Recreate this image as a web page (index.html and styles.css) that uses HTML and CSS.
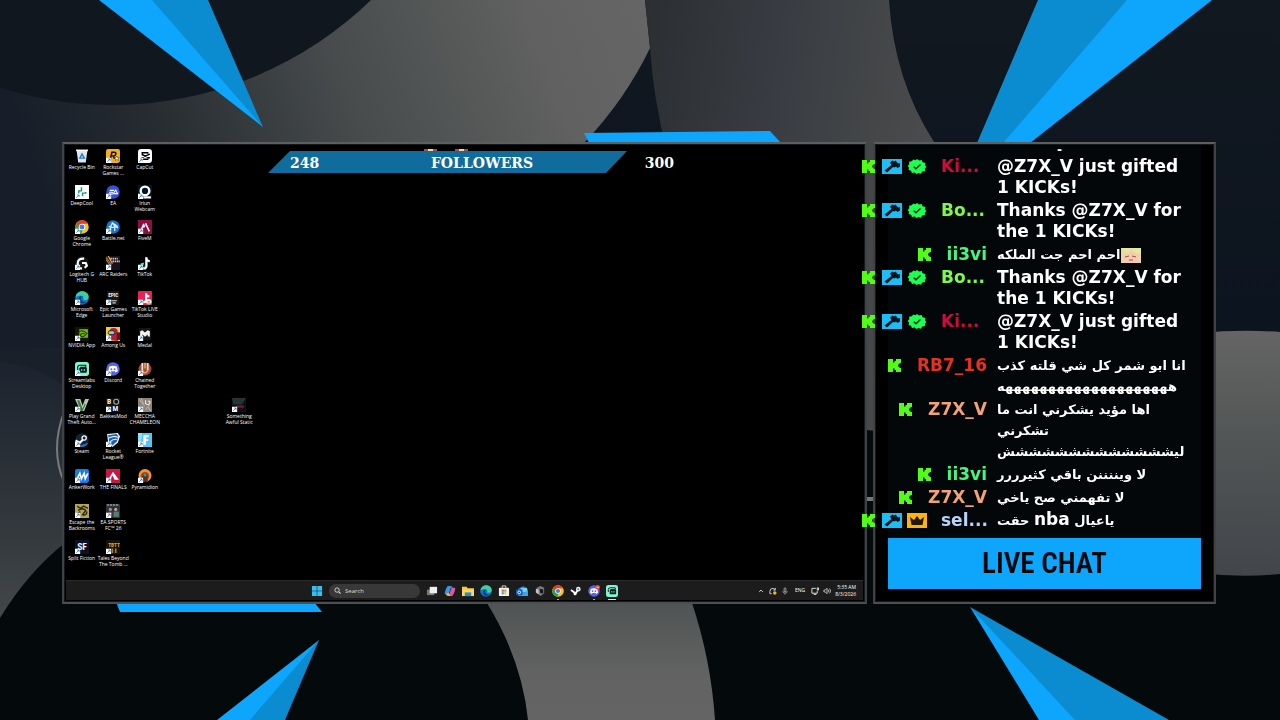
FILE: index.html
```html
<!DOCTYPE html>
<html lang="en">
<head>
  <meta charset="UTF-8">
  <meta name="viewport" content="width=device-width, initial-scale=1.0">
  <title>Stream Overlay</title>
  <link rel="stylesheet" href="styles.css">
</head>
<body>
  <svg class="backdrop" viewBox="0 0 1280 720" preserveAspectRatio="none" aria-hidden="true">
    <defs>
      <linearGradient id="sky" x1="0" y1="0.2" x2="1" y2="0">
        <stop offset="0" stop-color="#171e29"/>
        <stop offset="0.2" stop-color="#272c31"/>
        <stop offset="0.5" stop-color="#484c4d"/>
        <stop offset="0.8" stop-color="#606160"/>
        <stop offset="1" stop-color="#666"/>
      </linearGradient>
      <linearGradient id="side" x1="0" y1="0" x2="0" y2="1">
        <stop offset="0" stop-color="#1a212d"/>
        <stop offset="0.5" stop-color="#34393e"/>
        <stop offset="1" stop-color="#565959"/>
      </linearGradient>
      <linearGradient id="mid" x1="0" y1="0" x2="1" y2="0.2">
        <stop offset="0" stop-color="#2b2f32"/>
        <stop offset="0.45" stop-color="#383c42"/>
        <stop offset="1" stop-color="#4a4b4b"/>
      </linearGradient>
      <linearGradient id="low" x1="0" y1="0" x2="0" y2="1">
        <stop offset="0" stop-color="#505454"/>
        <stop offset="0.6" stop-color="#626262"/>
        <stop offset="1" stop-color="#646464"/>
      </linearGradient>
      <linearGradient id="disc" x1="0" y1="0" x2="0" y2="1">
        <stop offset="0" stop-color="#646564"/>
        <stop offset="0.4" stop-color="#545757"/>
        <stop offset="1" stop-color="#42454a"/>
      </linearGradient>
      <linearGradient id="night" x1="0" y1="0" x2="0" y2="1">
        <stop offset="0" stop-color="#11181f"/>
        <stop offset="1" stop-color="#0c1420"/>
      </linearGradient>
    </defs>
    <rect width="1280" height="720" fill="#04090b"/>
    <rect width="660" height="360" fill="url(#sky)"/>
    <circle cx="112" cy="-267" r="372" fill="#11171e"/>
    <rect y="348" width="200" height="372" fill="url(#side)"/>
    <path d="M0 348q30 0 62 6v30q-30-20-62-22z" fill="#1a202a"/>
    <path d="M645 0H1280V333H584V143Q625 100 650 48z" fill="url(#night)"/>
    <path d="M645 0H889Q894 80 934 142V436L866 430V360H760Q660 200 650 48z" fill="url(#mid)"/>
    <rect x="866" y="497" width="8" height="4" fill="#777"/>
    <path d="M1200 333Q1240 329 1280 332V574Q1240 578 1200 573z" fill="url(#disc)"/>
    <path d="M0 618Q28 572 66 542H300L487 603Q520 660 528 720H0z" fill="#04090b"/>
    <path d="M487 603H692Q711 660 715 720H528Q522 660 487 603z" fill="url(#low)"/>
    <path d="M64 412Q50 450 64 482" fill="none" stroke="#777a7c" stroke-width="2"/>
    <g fill="#0ea5fc">
      <path d="M99 0H180L263 127z"/>
      <path d="M1080 0H1212L1030 143H990z"/>
      <path d="M584 133L770 131L781 143H589z"/>
      <path d="M116 602H314L322 612H120z"/>
      <path d="M217 720H270L319 640z"/>
      <path d="M1039 720H1120L970 607z"/>
    </g>
    <g fill="#0b8bd0">
      <path d="M152 0H208L263 127z"/>
      <path d="M1038 0H1127L1003 143H977z"/>
      <path d="M250 720H285L319 640z"/>
      <path d="M1075 720H1169L970 607z"/>
    </g>
  </svg>

  <!-- shared drawings -->
  <svg class="sprites" aria-hidden="true">
    <symbol id="arrow" viewBox="0 0 5 5"><path d="M0 0h5v5H0z" fill="#fff"/><path d="M1.2 3.9L3.6 1.4M2 1.3h1.8v1.8" stroke="#2a6fc0" stroke-width=".7" fill="none"/></symbol>
    <symbol id="kick" viewBox="0 0 13 13"><path d="M0 0h5v3.500h1.500V2H8V0h5v4h-1.500v1.500H10v2h1.500V9H13v4H8v-2H6.500V9.500H5V13H0z" fill="#53fc18"/></symbol>
    <symbol id="hammer" viewBox="0 0 20 15"><path d="M0 0h20v15H0z" fill="#1dbdf5"/><path d="M8 3.500l2.500-2 1.500 1 1.500-1 2.500 3 2-.5v3.500l-2.500 1.500-1.500-1.500-1.500 1-1.500-.5L5 13.500 2.500 11.500 9.500 6z" fill="#07141b"/></symbol>
    <symbol id="verified" viewBox="0 0 20 16"><path d="M10 0l2.200 1.600L15 1l1 2.500 3 .8-.5 2.600L20 8.500l-1.700 1.800.3 2.500-3 .6L14 15.600l-2.500-.8L9.500 16l-2-1.500-3 .4-.8-2.300L1 11.600l.6-2.400L0 7.500l1.800-2L1.500 3l3-.5L6 .4l2.400.8z" fill="#1cff50"/><path d="M6.500 8.300l2.400 2.200 4.800-4.700" stroke="#06210c" stroke-width="1.400" fill="none"/></symbol>
    <symbol id="crown" viewBox="0 0 20 15"><path d="M0 0h20v15H0z" fill="#fdb40a"/><path d="M3 4l4 3 3-4 3 4 4-3-1.500 8h-11z" fill="#241700"/></symbol>
    <symbol id="edge" viewBox="0 0 13 13"><circle cx="6.500" cy="6.500" r="6.300" fill="#1373c4"/><path d="M.5 6C1 2.500 3.500.3 6.700.3c3.500 0 6 2.400 6 5 0 2-1.500 3.200-3.500 3.200-1 0-1.800-.4-1.500-1 .8-1.400-.2-3-2-3C3.500 4.500 1.500 5 .5 6z" fill="#3ad0a0"/><path d="M3.500 8c0-2 1-3.300 2.700-3.500C4.500 7.500 6.500 11 10.500 10.500c-1 1.300-7 2.500-7-2.500z" fill="#0b3f86"/></symbol>
    <symbol id="chrome" viewBox="0 0 13 13"><circle cx="6.500" cy="6.500" r="6.300" fill="#fbc116"/><path d="M1 3.400a6.300 6.300 0 0 1 11 0H6.500L4 8z" fill="#e33b2e"/><path d="M1 3.400L4 8.200l3 1-1.200 3.600A6.300 6.300 0 0 1 1 3.400z" fill="#25a24b"/><circle cx="6.500" cy="6.500" r="3" fill="#fff"/><circle cx="6.500" cy="6.500" r="2.300" fill="#3b7ded"/></symbol>
    <symbol id="discord" viewBox="0 0 13 13"><circle cx="6.500" cy="6.500" r="6.300" fill="#5562ea"/><path d="M3 4.200q3.500-1.600 7 0l1 4.300-2.200 1.200-.6-1H4.800l-.6 1L2 8.500z" fill="#fff"/><circle cx="5" cy="6.700" r=".9" fill="#5562ea"/><circle cx="8" cy="6.700" r=".9" fill="#5562ea"/></symbol>
    <symbol id="streamlabs" viewBox="0 0 13 13"><rect width="13" height="13" rx="2.500" fill="#80f5d2"/><path d="M2.500 7.500V5q0-2 2-2h5.500v2H5" stroke="#0c1a20" fill="none"/><rect x="4" y="5" width="7" height="5" rx="1" fill="#0c1a20"/><path d="M6.300 6.500v1.800M8.600 6.500v1.800" stroke="#80f5d2" stroke-width=".9"/></symbol>
    <symbol id="steam" viewBox="0 0 13 13"><circle cx="6.500" cy="6.500" r="6.300" fill="#10233f"/><path d="M3 12a6.300 6.300 0 0 0 9.500-3z" fill="#1b76ab"/><circle cx="8.500" cy="4.700" r="2" fill="none" stroke="#fff" stroke-width="1.200"/><path d="M.5 7l4 2 3-3" stroke="#fff" stroke-width="2" fill="none"/></symbol>
  </svg>

  <main class="stage">
    <section class="panel screen" aria-label="Desktop">
      <div class="desktop">
        <a class="app" href="#"><svg viewBox="0 0 13 13"><path d="M1.500 1.500h10l-1.500 11H3z" fill="#dce8ee"/><path d="M1 .5h11V2H1z" fill="#fff"/><path d="M4.500 8.500l2-3.800 2.200 3.800z" fill="none" stroke="#1b7fd6" stroke-width="1.300"/></svg>Recycle Bin</a>
        <a class="app" href="#"><svg viewBox="0 0 13 13"><rect width="13" height="13" rx="2" fill="#f7ae1c"/><path d="M4 9.500L5.500 3H8q1.500.3 1 2T6.500 6.500L8 9" fill="none" stroke="#111" stroke-width="1.500"/><path d="M10 6.500l.7 1.500h1.600l-1.200 1 .5 1.700-1.600-1-1.500 1 .4-1.700-1.200-1h1.600z" fill="#fff" stroke="#111" stroke-width=".4"/><use href="#arrow" y="8" width="5" height="5"/></svg>Rockstar<br>Games ...</a>
        <a class="app" href="#"><svg viewBox="0 0 13 13"><rect width="13" height="13" rx="3" fill="#fff"/><path d="M9 4.500V3.500H4v1.800l7 3M9 8.500v1H4V7.800l7-3" fill="none" stroke="#000" stroke-width="1.400"/><use href="#arrow" y="8" width="5" height="5"/></svg>CapCut</a>
        <a class="app" href="#"><svg viewBox="0 0 13 13"><path d="M0 0h13v13H0z" fill="#fff"/><path d="M6 2v3.500H3.500V8M7 10.500V7.500h3v-1" fill="none" stroke="#139b79" stroke-width="1.300"/><use href="#arrow" y="8" width="5" height="5"/></svg>DeepCool</a>
        <a class="app" href="#"><svg viewBox="0 0 13 13"><circle cx="6.500" cy="6.500" r="6.300" fill="#3450dc"/><path d="M3.500 5h4M3 6.700h3.500M2.500 8.300H6.500L9 4.700l2 3.800M7.500 8h3" fill="none" stroke="#fff" stroke-width="1"/><use href="#arrow" y="8" width="5" height="5"/></svg>EA</a>
        <a class="app" href="#"><svg viewBox="0 0 13 13"><path d="M0 0h13v13H0z" fill="#071426"/><circle cx="6.500" cy="5.500" r="4" fill="none" stroke="#fff" stroke-width="2.200"/><path d="M5 11.500h7" stroke="#fff" stroke-width="2"/><use href="#arrow" y="8" width="5" height="5"/></svg>Iriun<br>Webcam</a>
        <a class="app" href="#"><svg viewBox="0 0 13 13"><use href="#chrome"/><use href="#arrow" y="8" width="5" height="5"/></svg>Google<br>Chrome</a>
        <a class="app" href="#"><svg viewBox="0 0 13 13"><circle cx="6.500" cy="6.500" r="6.300" fill="#1673d2"/><path d="M5.500 2Q9 5 8 10M2.500 6q4.500 2 8.500-.5M4 10Q4 5 6 3q3 1 5 4.500" fill="none" stroke="#d9f1ff" stroke-width="1.200"/><use href="#arrow" y="8" width="5" height="5"/></svg>Battle.net</a>
        <a class="app" href="#"><svg viewBox="0 0 13 13"><path d="M0 0h13v13H0z" fill="#8e0f43"/><path d="M7 3l3.500 7.500M5.500 3.500L3 9M5 7l1.500-2" stroke="#fff" stroke-width="1.400"/><use href="#arrow" y="8" width="5" height="5"/></svg>FiveM</a>
        <a class="app" href="#"><svg viewBox="0 0 13 13"><circle cx="6.500" cy="6.500" r="6.300" fill="#151515"/><path d="M8.500 2.500Q2.500 2 2.500 7t4 4.500M6.500 6.500H10l1 2.500-2 2" fill="none" stroke="#fff" stroke-width="2"/><use href="#arrow" y="8" width="5" height="5"/></svg>Logitech G<br>HUB</a>
        <a class="app" href="#"><svg viewBox="0 0 13 13"><path d="M0 0h13v13H0z" fill="#17131c"/><path d="M0 1l5 7" stroke="#e9472f" stroke-width="1.300"/><path d="M0 3l4 6" stroke="#25ad79"/><path d="M2 0l4 7" stroke="#edbd3f"/><path d="M4 2.500h7M6 5h7" stroke="#d6c8be" stroke-width="1.700" stroke-dasharray="1.500 .6"/><use href="#arrow" y="8" width="5" height="5"/></svg>ARC Raiders</a>
        <a class="app" href="#"><svg viewBox="0 0 13 13"><path d="M7.500 1v8q-.5 2.500-2.800 2.200T3.500 7.500l2-.5M7.500 2q.5 2.500 3 3" fill="none" stroke="#23e5e2" stroke-width="2"/><path d="M8 1.500v8q-.5 2.500-2.800 2.200M8 2.500q.5 2 3 2.500" fill="none" stroke="#fff" stroke-width="1.700"/><use href="#arrow" y="8" width="5" height="5"/></svg>TikTok</a>
        <a class="app" href="#"><svg viewBox="0 0 13 13"><use href="#edge"/><use href="#arrow" y="8" width="5" height="5"/></svg>Microsoft<br>Edge</a>
        <a class="app" href="#"><svg viewBox="0 0 13 13"><path d="M1 0h11v13H1z" fill="#171717"/><text x="2" y="6" class="mark">EPIC</text><path d="M5 9h5M6 11h3" stroke="#ddd"/><use href="#arrow" y="8" width="5" height="5"/></svg>Epic Games<br>Launcher</a>
        <a class="app" href="#"><svg viewBox="0 0 13 13"><rect width="13" height="13" rx="1" fill="#ee1d52"/><path d="M7.500 2v6.500q-.5 2-2.500 1.800M7.500 3q.5 2 3 2" fill="none" stroke="#fff" stroke-width="2"/><circle cx="10" cy="10" r="2.500" fill="#fff"/><circle cx="10" cy="10" r="1.200" fill="#e4a92c"/><path d="M8 12h4" stroke="#28c89e"/><use href="#arrow" y="8" width="5" height="5"/></svg>TikTok LIVE<br>Studio</a>
        <a class="app" href="#"><svg viewBox="0 0 13 13"><path d="M0 0h13v13H0z" fill="#11160d"/><path d="M4 2h8v8H4z" fill="#76b900"/><path d="M2 6q4-5 9 0-4 5-6 2 1-3 4-1.500" fill="none" stroke="#1d3400"/><use href="#arrow" y="8" width="5" height="5"/></svg>NVIDIA App</a>
        <a class="app" href="#"><svg viewBox="0 0 13 13"><path d="M0 0h13v13H0z" fill="#f3cd39"/><path d="M3 12V5q0-4 4-4t4 4v8" fill="#b71d38"/><path d="M10 5h3v7h-3z" fill="#5c1020"/><rect x="2" y="3.500" width="6" height="3.500" rx="1.700" fill="#7ed0e0" stroke="#16141c" stroke-width=".7"/><use href="#arrow" y="8" width="5" height="5"/></svg>Among Us</a>
        <a class="app" href="#"><svg viewBox="0 0 13 13"><path d="M1 1h11v11H1z" fill="#151719"/><path d="M2 4l2-1 2.500 2L9 3l2 1v5l-2-.5V7L6.500 9 4 7v3H2z" fill="#f2f2f2"/><use href="#arrow" y="8" width="5" height="5"/></svg>Medal</a>
        <a class="app" href="#"><svg viewBox="0 0 13 13"><use href="#streamlabs"/><use href="#arrow" y="8" width="5" height="5"/></svg>Streamlabs<br>Desktop</a>
        <a class="app" href="#"><svg viewBox="0 0 13 13"><use href="#discord"/><use href="#arrow" y="8" width="5" height="5"/></svg>Discord</a>
        <a class="app" href="#"><svg viewBox="0 0 13 13"><circle cx="6.500" cy="6.500" r="6" fill="#9c4a30"/><path d="M4 1v7M9 1v7" stroke="#eee0d3" stroke-width="1.600"/><path d="M4 8q2.500 4 5 0M6.500 1v5" stroke="#dd9b75" stroke-width="1.600" fill="none"/><use href="#arrow" y="8" width="5" height="5"/></svg>Chained<br>Together</a>
        <a class="app" href="#"><svg viewBox="0 0 13 13"><path d="M0 1h5l2 6 2.500-6H13L8.500 12H5z" fill="#b8c7b8"/><path d="M2 2h2l3 8 2-5 1 1-3 6H5z" fill="#3f7a3b"/><use href="#arrow" y="8" width="5" height="5"/></svg>Play Grand<br>Theft Auto...</a>
        <a class="app" href="#"><svg viewBox="0 0 13 13"><path d="M0 0h13v13H0z" fill="#111"/><text x="1" y="6" class="mark big">B</text><circle cx="9.500" cy="3.500" r="2.300" fill="none" stroke="#aaa"/><text x="6" y="12.500" class="mark big">M</text><use href="#arrow" y="8" width="5" height="5"/></svg>BakkesMod</a>
        <a class="app" href="#"><svg viewBox="0 0 13 13"><path d="M0 0h13v13H0z" fill="#8d817d"/><path d="M1 1l4 5M3 0l3 8M9 8l3 4M11 6l-4 5" stroke="#b5aaa4"/><path d="M7 2v3q2 2 4 0V3H9" stroke="#efe9e5" fill="none"/><use href="#arrow" y="8" width="5" height="5"/></svg>MECCHA<br>CHAMELEON</a>
        <a class="app" href="#"><svg viewBox="0 0 13 13"><use href="#steam"/><use href="#arrow" y="8" width="5" height="5"/></svg>Steam</a>
        <a class="app" href="#"><svg viewBox="0 0 13 13"><path d="M1 1l10-1 2 3-2 6-5 4-4-4z" fill="#e4f2fb"/><path d="M2 2l8-1 1.500 2L10 8l-4 3.500L3 8z" fill="#1a62b3"/><path d="M2 5q5-3 9-1M4 8q3-3 6-2" stroke="#fff" fill="none"/><use href="#arrow" y="8" width="5" height="5"/></svg>Rocket<br>League®</a>
        <a class="app" href="#"><svg viewBox="0 0 13 13"><path d="M0 0h13v13H0z" fill="#52c6f4"/><path d="M0 0h4L2 13H0z" fill="#8ee0fb"/><path d="M5 2h5v2H7.500v1.500h2v2h-2V11H5z" fill="#fff"/><use href="#arrow" y="8" width="5" height="5"/></svg>Fortnite</a>
        <a class="app" href="#"><svg viewBox="0 0 13 13"><rect width="13" height="13" rx="2" fill="#147cf0"/><path d="M2 9l2.500-5L6 9l2.500-5L9.500 9 12 4" fill="none" stroke="#fff" stroke-width="1.500"/><use href="#arrow" y="8" width="5" height="5"/></svg>AnkerWork</a>
        <a class="app" href="#"><svg viewBox="0 0 13 13"><path d="M0 0h13v13H0z" fill="#cb1443"/><path d="M6.500 2.500L12 10H8L6 6l-2 4H2z" fill="#fff"/><use href="#arrow" y="8" width="5" height="5"/></svg>THE FINALS</a>
        <a class="app" href="#"><svg viewBox="0 0 13 13"><circle cx="6.500" cy="6" r="6" fill="#f2962f"/><circle cx="6.500" cy="6.500" r="4" fill="#ba4a1e"/><path d="M4 12V7q0-3 2.500-3T9 7v5z" fill="#54301f"/><circle cx="6.500" cy="5.500" r="1.500" fill="#22a099"/><use href="#arrow" y="8" width="5" height="5"/></svg>Pyramidion</a>
        <a class="app" href="#"><svg viewBox="0 0 13 13"><path d="M0 0h13v13H0z" fill="#b5a755"/><path d="M2 2l3 2 3-2 4 2M3 6q4-3 7 0l-3 4q4 1 4-3M1 10l4-3" stroke="#302c12" stroke-width="1.400" fill="none"/><use href="#arrow" y="8" width="5" height="5"/></svg>Escape the<br>Backrooms</a>
        <a class="app" href="#"><svg viewBox="0 0 13 13"><path d="M0 0h13v13H0z" fill="#283237"/><path d="M1 1h11" stroke="#c7cfd1" stroke-dasharray="2 .7"/><circle cx="4" cy="5" r="1.500" fill="#b3878a"/><circle cx="9" cy="5" r="1.500" fill="#c4a08f"/><path d="M2 7h4v5H2z" fill="#7c3850"/><path d="M7 7h5v5H7z" fill="#4d8170"/><use href="#arrow" y="8" width="5" height="5"/></svg>EA SPORTS<br>FC™ 26</a>
        <a class="app" href="#"><svg viewBox="0 0 13 13"><path d="M0 0h13v13H0z" fill="#0d1126"/><text x="2" y="9" class="mark tall">SF</text><use href="#arrow" y="8" width="5" height="5"/></svg>Split Fiction</a>
        <a class="app" href="#"><svg viewBox="0 0 13 13"><path d="M0 0h13v13H0z" fill="#17130a"/><text x="2" y="6.500" class="mark gold">TBTT</text><path d="M6 8v4M9 8v4" stroke="#a48430" stroke-width="1.500"/><use href="#arrow" y="8" width="5" height="5"/></svg>Tales Beyond<br>The Tomb ...</a>
        <a class="app loose" href="#"><svg viewBox="0 0 13 13"><path d="M0 0h13v13H0z" fill="#0d1113"/><path d="M0 0h13L9 6H1z" fill="#243536"/><path d="M4 7h7v2H4z" fill="#861436"/><use href="#arrow" y="8" width="5" height="5"/></svg>Something<br>Awful Static</a>
      </div>

      <div class="goal">
        <svg class="emotes" viewBox="0 0 44 3" aria-hidden="true"><path d="M0 0h13v2H0zM31 0h13v2H31z" fill="#a34b62"/><path d="M4 0h5v2H4zM35 0h5v2h-5z" fill="#f3dc83"/></svg>
        <span>248</span><span>FOLLOWERS</span><span>300</span>
      </div>

      <footer class="taskbar">
        <div class="pinned">
          <button aria-label="Start"><svg viewBox="0 0 13 13"><path d="M1 1h5.200v5.200H1zM6.800 1H12v5.200H6.800zM1 6.800h5.200V12H1zM6.800 6.800H12V12H6.800z" fill="#36bff2"/></svg></button>
          <label class="search"><svg viewBox="0 0 8 8"><circle cx="3.500" cy="3.500" r="2.500" fill="none" stroke="#ddd"/><path d="M5.500 5.500L7.500 7.500" stroke="#ddd" stroke-width="1.200"/></svg><input type="search" placeholder="Search" aria-label="Search"></label>
          <button aria-label="Task view"><svg viewBox="0 0 13 13"><path d="M1 5h8v6H1z" fill="#777"/><path d="M4 2h8v7H4z" fill="#eee"/></svg></button>
          <button aria-label="Copilot"><svg viewBox="0 0 13 13"><path d="M4 1h4L6 7q-1 3-3 3H1q-.5-1 .5-4T4 1z" fill="#2c9cf0"/><path d="M9 3h3q.5 1-.5 4T9 12H5l2-6q1-3 2-3z" fill="#dc5a9a"/><path d="M5 8l2 4H5q-2 0-3-2z" fill="#f1b53a"/><path d="M7 1q2 0 2.500 2l-2 2z" fill="#7b5be6"/></svg></button>
          <button aria-label="File Explorer"><svg viewBox="0 0 13 13"><path d="M0 2h5l1 1.500h7V12H0z" fill="#f8c83c"/><path d="M0 5h13v7H0z" fill="#fcd85c"/><path d="M3 8h7v4H3z" fill="#268fd9"/></svg></button>
          <button aria-label="Edge"><svg viewBox="0 0 13 13"><use href="#edge"/></svg></button>
          <button aria-label="Store"><svg viewBox="0 0 13 13"><path d="M4.500 3V1h4v2" stroke="#ddd" fill="none"/><rect x="1" y="3" width="11" height="9" rx="1" fill="#f2f2f2"/><path d="M4 5h2.300v2.300H4z" fill="#ef5132"/><path d="M6.800 5h2.300v2.300H6.800z" fill="#7db928"/><path d="M4 7.800h2.300v2.300H4z" fill="#2aa5e8"/><path d="M6.800 7.800h2.300v2.300H6.800z" fill="#f7b825"/></svg></button>
          <button aria-label="Outlook"><svg viewBox="0 0 13 13"><path d="M2 4l6-3 5 4v7H2z" fill="#1b73cf"/><path d="M5 3h7v5H5z" fill="#74cdf8"/><path d="M2 12l11-6v6z" fill="#38a6ef"/><rect x="0" y="5" width="7" height="6" rx="1" fill="#0f5ab3"/><circle cx="3.500" cy="8" r="1.500" fill="none" stroke="#fff"/></svg></button>
          <button aria-label="Game launcher"><svg viewBox="0 0 13 13"><path d="M3 3l4-2 4 2v6l-4 3-4-3z" fill="#777b7e"/><path d="M6 4l4 1v4H7z" fill="#161819"/><path d="M2 4l3 1v5L2 8z" fill="#c3c6c8"/></svg></button>
          <button class="running" aria-label="Chrome"><svg viewBox="0 0 13 13"><use href="#chrome"/></svg></button>
          <button aria-label="Steam"><svg viewBox="0 0 13 13"><path d="M1 5.500l5 3.500 3-4" stroke="#fff" stroke-width="2" fill="none"/><circle cx="9" cy="4.500" r="2.500" fill="#e9f1f7"/><circle cx="9" cy="4.500" r="1" fill="#3c78a8"/><circle cx="5.500" cy="9.500" r="1.700" fill="#fff"/></svg></button>
          <button class="running" aria-label="Discord"><svg viewBox="0 0 13 13"><use href="#discord"/><circle cx="10.500" cy="2.500" r="2.500" fill="#e44b55"/><path d="M9.300 2.500h2.400" stroke="#fff" stroke-width=".8"/></svg></button>
          <button class="running active" aria-label="Streamlabs"><svg viewBox="0 0 13 13"><use href="#streamlabs"/></svg></button>
        </div>
        <div class="tray">
          <svg viewBox="0 0 9 9"><path d="M2.500 5.500l2-2 2 2" stroke="#eee" fill="none"/></svg>
          <svg viewBox="0 0 9 9"><path d="M1 5q0-3.500 3.500-3.500L7 3M7 1v2.500H5M1 5v2.500h2" stroke="#ddd" fill="none"/><circle cx="6.500" cy="6.800" r="2" fill="#f3ae2b"/></svg>
          <svg viewBox="0 0 9 9"><rect x="3.500" y="1" width="2" height="4.500" rx="1" fill="none" stroke="#ccc" stroke-width=".8"/><path d="M2 4.500q0 2.500 2.500 2.500T7 4.500M4.500 7v1.500" stroke="#ccc" stroke-width=".7" fill="none"/></svg>
          <span>ENG</span>
          <svg viewBox="0 0 9 9"><path d="M5.500 1.500H1V7h6V4.500M3 8.300h3M7 1h1.500v2.500H7z" stroke="#eee" fill="none"/></svg>
          <svg viewBox="0 0 9 9"><path d="M1 3.500h1.500l2-2v6l-2-2H1zM6 3q1 1.500 0 3M7.500 1.800q2 2.700 0 5.400" stroke="#eee" stroke-width=".8" fill="none"/></svg>
          <time>5:35 AM<br>8/3/2026</time>
        </div>
      </footer>
    </section>

    <section class="panel chat" aria-label="Live chat">
      <div class="chat-body">
        <ul class="messages">
          <li class="cut"><p>-</p></li>
          <li><div class="user"><svg class="k"><use href="#kick"/></svg><svg><use href="#hammer"/></svg><svg><use href="#verified"/></svg><b class="short crimson">Ki...</b></div><p>@Z7X_V just gifted<br>1 KICKs!</p></li>
          <li><div class="user"><svg class="k"><use href="#kick"/></svg><svg><use href="#hammer"/></svg><svg><use href="#verified"/></svg><b class="short lime">Bo...</b></div><p>Thanks @Z7X_V for<br>the 1 KICKs!</p></li>
          <li><div class="user"><svg class="k"><use href="#kick"/></svg><b class="mint">ii3vi</b></div><p dir="rtl" lang="ar"><svg class="emote" viewBox="0 0 20 15"><path d="M0 0h20v15H0z" fill="#ead9a0"/><path d="M2 7q7-5 16-1v9H2z" fill="#f4cdb1"/><path d="M0 0l7 5 4-4 4 5 5-1V0z" fill="#e6e7a3"/><path d="M4 9l4-1M11 8l4 1M8 12h4" stroke="#9b4c4b" fill="none"/></svg>احم احم جت الملكه</p></li>
          <li><div class="user"><svg class="k"><use href="#kick"/></svg><svg><use href="#hammer"/></svg><svg><use href="#verified"/></svg><b class="short lime">Bo...</b></div><p>Thanks @Z7X_V for<br>the 1 KICKs!</p></li>
          <li><div class="user"><svg class="k"><use href="#kick"/></svg><svg><use href="#hammer"/></svg><svg><use href="#verified"/></svg><b class="short crimson">Ki...</b></div><p>@Z7X_V just gifted<br>1 KICKs!</p></li>
          <li><div class="user"><svg class="k"><use href="#kick"/></svg><b class="red">RB7_16</b></div><p dir="rtl" lang="ar">انا ابو شمر كل شي قلته كذب<br>ههههههههههههههههههههه</p></li>
          <li><div class="user"><svg class="k"><use href="#kick"/></svg><b class="peach">Z7X_V</b></div><p dir="rtl" lang="ar">اها مؤيد يشكرني انت ما<br>تشكرني<br>ليششششششششششششش</p></li>
          <li><div class="user"><svg class="k"><use href="#kick"/></svg><b class="mint">ii3vi</b></div><p dir="rtl" lang="ar">لا ويننننن باقي كثيرررر</p></li>
          <li><div class="user"><svg class="k"><use href="#kick"/></svg><b class="peach">Z7X_V</b></div><p dir="rtl" lang="ar">لا تفهمني صح ياخي</p></li>
          <li><div class="user"><svg class="k"><use href="#kick"/></svg><svg><use href="#hammer"/></svg><svg><use href="#crown"/></svg><b class="short ice">sel...</b></div><p dir="rtl" lang="ar">ياعيال <span lang="en">nba</span> حقت</p></li>
        </ul>
        <h2>LIVE CHAT</h2>
      </div>
    </section>
  </main>
</body>
</html>
```
FILE: styles.css
```css
* {
  box-sizing: border-box;
}
body {
  margin: 0;
  background-color: #04090b;
  color: #fff;
  font-family: "Open Sans", "Noto Sans", sans-serif;
}
.backdrop {
  position: fixed;
  top: 0;
  left: 0;
  width: 100%;
  height: 100%;
}
.sprites {
  position: absolute;
  width: 0;
  height: 0;
}
.stage {
  position: relative;
  display: grid;
  grid-template-columns: 805fr 343fr;
  gap: 6px;
  min-height: 100vh;
  padding: 142px 64px 116px 62px;
}
.panel {
  position: relative;
  display: flex;
  flex-direction: column;
  padding: 2px;
  border: 2px solid #55585a;
  border-color: #5c5e60 #404345 #4c4f51 #404345;
  background-color: #000;
  box-shadow: inset 0 0 0 1px #15191c;
  min-width: 0;
}

/* desktop icons */
.desktop {
  flex: 1;
  display: grid;
  grid-template-columns: repeat(6, 1fr);
  grid-template-rows: repeat(12, 1fr);
  width: 189px;
  padding: 3px 0 5px;
}
.app {
  display: flex;
  flex-direction: column;
  align-items: center;
  height: 28px;
  color: #fff;
  font-size: 5px;
  line-height: 6px;
  text-align: center;
  text-decoration: none;
  white-space: nowrap;
}
.app:nth-child(3n+1) {
  grid-column: 1;
}
.app svg {
  flex: none;
  width: 14px;
  height: 14px;
  margin-bottom: 1px;
}
.app:nth-child(n+33) {
  grid-row: 12;
}
.app:nth-child(34) {
  grid-column: 2;
}
.app:nth-child(33) {
  grid-column: 1;
}
.app.loose {
  grid-column: 6;
  grid-row: 8;
}
.mark {
  fill: #eee;
  font: bold 5px "Roboto Condensed", Roboto, sans-serif;
}
.mark.big {
  font-size: 7px;
}
.mark.tall {
  font-size: 9px;
}
.mark.gold {
  fill: #d8ab35;
}

/* follower goal */
.goal {
  position: absolute;
  top: 7px;
  left: 204px;
  display: flex;
  justify-content: space-between;
  align-items: center;
  width: 406px;
  height: 22px;
  padding: 1px 0 0 22px;
  font: bold 14px "DejaVu Serif", serif;
}
.goal::before {
  content: '';
  position: absolute;
  top: 0;
  left: 0;
  width: 359px;
  height: 22px;
  background-color: #106c9c;
  clip-path: polygon(22px 0, 100% 0, 338px 100%, 0 100%);
}
.goal span {
  position: relative;
}
.emotes {
  position: absolute;
  top: -2px;
  left: 156px;
  width: 44px;
  height: 3px;
}

/* taskbar */
.taskbar {
  display: grid;
  grid-template-columns: 1fr auto 1fr;
  align-items: center;
  height: 20px;
  background-color: #1c1c1c;
  border-top: 1px solid #2b2b2b;
}
.pinned {
  grid-column: 2;
  display: flex;
  align-items: center;
  gap: 6px;
}
.pinned button {
  position: relative;
  display: flex;
  width: 12px;
  height: 12px;
  padding: 0;
  border: 0;
  background: none;
}
.pinned button svg {
  width: 12px;
  height: 12px;
}
.running::after {
  content: '';
  position: absolute;
  left: 5px;
  bottom: -3px;
  width: 2px;
  height: 1px;
  background-color: #aaa;
}
.running.active::after {
  left: 2px;
  width: 8px;
  background-color: #ddd;
}
.search {
  display: flex;
  align-items: center;
  gap: 4px;
  width: 91px;
  height: 14px;
  padding: 0 5px;
  border-radius: 7px;
  background-color: #383838;
}
.search svg {
  flex: none;
  width: 7px;
  height: 7px;
}
.search input {
  width: 100%;
  padding: 0;
  border: 0;
  outline: 0;
  background: none;
  color: #ddd;
  font: 6px "Open Sans", sans-serif;
}
.search input::placeholder {
  color: #ddd;
}
.tray {
  display: flex;
  align-items: center;
  justify-content: flex-end;
  gap: 4px;
  padding-right: 7px;
  font-size: 5px;
  line-height: 7px;
}
.tray svg {
  width: 8px;
  height: 8px;
}
.tray span {
  margin: 0 2px;
}
.tray time {
  text-align: right;
}

/* chat */
.chat-body {
  flex: 1;
  display: flex;
  flex-direction: column;
  margin: 0 11px 11px;
  background-color: #030709;
}
.messages {
  flex: 1;
  margin: 0 0 0 -26px;
  padding: 0;
  list-style: none;
}
.messages li {
  display: grid;
  grid-template-columns: 125px 1fr;
  column-gap: 10px;
  margin-bottom: 2px;
  font: bold 17px/21px "DejaVu Sans", sans-serif;
}
.messages p {
  grid-column: 2;
  margin: 0;
  text-align: left;
  white-space: nowrap;
}
.messages p[lang="ar"] {
  font-size: 13px;
}
.messages span[lang="en"] {
  font-size: 17px;
  line-height: 17px;
}
.messages .cut {
  height: 8px;
  padding-left: 60px;
  font-size: 12px;
  line-height: 8px;
}
.user {
  display: flex;
  align-items: center;
  justify-content: flex-end;
  gap: 5px;
  height: 21px;
}
.user svg {
  flex: none;
  width: 20px;
  height: 15px;
}
.user .k {
  width: 13px;
  height: 13px;
  margin-right: 2px;
}
.user b {
  margin-left: 9px;
}
.user .short {
  width: 46px;
}
.emote {
  width: 20px;
  height: 15px;
  vertical-align: middle;
}
.crimson { color: #cf0a3c; }
.lime { color: #7bf94d; }
.mint { color: #45f580; }
.red { color: #e63022; }
.peach { color: #f2a274; }
.ice { color: #b9d2f8; }
.chat h2 {
  margin: 0;
  background-color: #0ea5fc;
  color: #04090b;
  font: 600 29px/51px "Roboto Condensed", Roboto, sans-serif;
  text-align: center;
}
```
